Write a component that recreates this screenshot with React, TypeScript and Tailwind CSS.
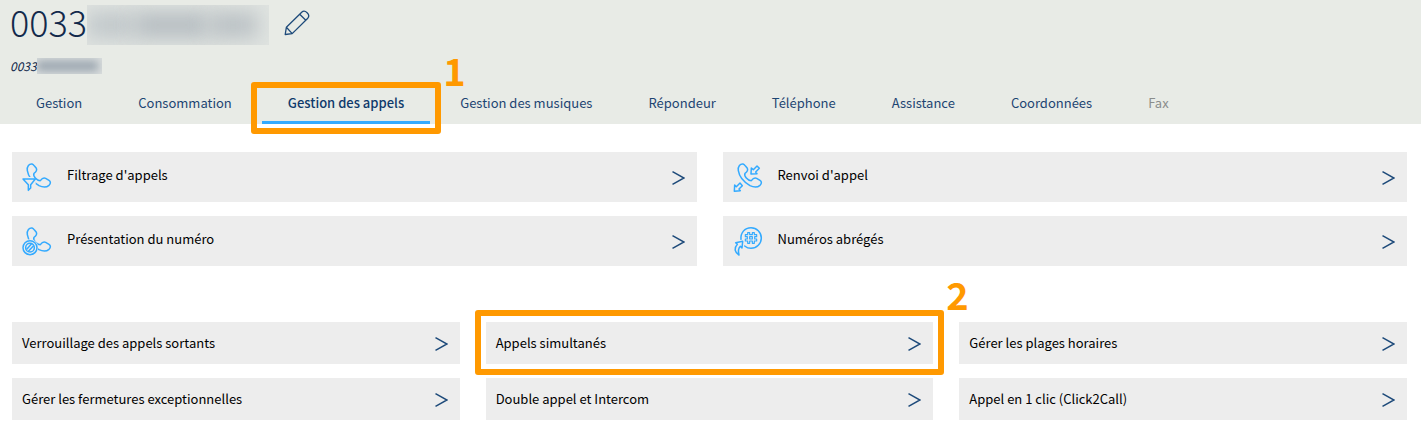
import type { ReactNode } from "react";

const HANDSET =
  "M52 74 C50 61 58 53 66 54 C70 55 71 57 74 61 L79 67 C82 74 78 78 72 82 C68 90 80 104 91 104 C96 97 100 93 107 97 L117 103 C123 107 122 113 117 118 C110 124 100 125 87 119 C70 109 55 93 52 74 Z";

function ServiceIcon({ children }: { children: ReactNode }) {
  return (
    <svg
      viewBox="36 51 87 87"
      className="size-[29px] shrink-0 overflow-visible"
      fill="none"
      stroke="#33aaff"
      strokeWidth="4.5"
      strokeLinejoin="round"
      strokeLinecap="round"
      aria-hidden="true"
    >
      {children}
    </svg>
  );
}

const FilterIcon = () => (
  <ServiceIcon>
    <path d={HANDSET} />
    <path d="M36 93 H69 L73 100 L78 112 L70 120 L60 136 H36 Z" fill="#ededed" stroke="none" />
    <path d="M39 99 H76 L62 116 V126 L55 133 V116 Z" />
  </ServiceIcon>
);

const ForwardIcon = () => (
  <ServiceIcon>
    <path d={HANDSET} />
    <path d="M91 66 L90 84 L108 83 L104 78 L115 67 L108 60 L97 71 Z" />
    <path d="M41 117 L40 136 L58 134 L54 129 L64 119 L57 111 L46 122 Z" />
  </ServiceIcon>
);

const PresentationIcon = () => (
  <ServiceIcon>
    <path d={HANDSET} />
    <circle cx="60" cy="113" r="25" fill="#ededed" stroke="none" />
    <circle cx="60" cy="113" r="21" />
    <circle cx="60" cy="113" r="13" />
    <path d="M51 117 L64 102 M56 123 L70 108" />
  </ServiceIcon>
);

const ShortNumberIcon = () => (
  <ServiceIcon>
    <path d="M60 88 C58 69 71 53 90 53 C107 53 121 67 121 84 C121 101 107 115 90 115 C83 115 76 112 71 108" />
    <path d="M80 68 H86 V74 H94 V68 H100 V74 H107 V80 H101 V87 H107 V93 H100 V100 H94 V93 H86 V100 H80 V93 H73 V87 H79 V80 H73 V74 H80 Z M86 80 H94 V87 H86 Z" strokeWidth="3.5" />
    <path d="M44 98 L65 94 L63 114 L58 109 C51 116 51 124 54 135 C41 127 38 115 49 103 Z" />
  </ServiceIcon>
);

function Chevron() {
  return (
    <svg viewBox="0 0 13 14" className="mt-0.5 h-3.5 w-[13px] shrink-0" fill="none" stroke="#1d4a7a" strokeWidth="1.5" aria-hidden="true">
      <path d="M0.5 0.7 L12 7 L0.5 13.3" />
    </svg>
  );
}

function Callout({ label, className, labelClassName }: { label: string; className: string; labelClassName: string }) {
  return (
    <span className={`pointer-events-none absolute z-10 rounded-[3px] border-6 border-[#ff9900] ${className}`}>
      <span className={`absolute left-full ml-2 text-[38px] leading-[38px] font-bold text-[#ff9900] ${labelClassName}`}>{label}</span>
    </span>
  );
}

const tabs = [
  "Gestion",
  "Consommation",
  "Gestion des appels",
  "Gestion des musiques",
  "Répondeur",
  "Téléphone",
  "Assistance",
  "Coordonnées",
  "Fax",
];

const services = [
  { label: "Filtrage d'appels", Icon: FilterIcon },
  { label: "Renvoi d'appel", Icon: ForwardIcon },
  { label: "Présentation du numéro", Icon: PresentationIcon },
  { label: "Numéros abrégés", Icon: ShortNumberIcon },
];

const options = [
  "Verrouillage des appels sortants",
  "Appels simultanés",
  "Gérer les plages horaires",
  "Gérer les fermetures exceptionnelles",
  "Double appel et Intercom",
  "Appel en 1 clic (Click2Call)",
];

export default function App() {
  return (
    <div className="bg-white font-['Noto_Sans_CJK_SC','Noto_Sans',sans-serif] text-[13px] text-black">
      <header className="bg-[#e8ebe6]">
        <div className="flex h-[50px] items-start pl-2.5">
          <h1 className="text-[36px] leading-[42px] font-light text-[#12294b]">0033</h1>
          <span className="mt-[5px] flex h-10 w-[182px] items-center overflow-hidden bg-[#dfe3e0] pr-3" aria-hidden="true">
            <span className="h-6 w-12 bg-[#bfc6c9] blur-[10px]" />
            <span className="h-6 grow bg-[#b4bbc0] blur-[10px]" />
            <span className="h-6 w-12 bg-[#b8bfc3] blur-[10px]" />
          </span>
          <button type="button" aria-label="Modifier" className="mt-2.5 ml-[15px]">
            <svg viewBox="0 0 26 26" className="size-[26px]" fill="none" stroke="#1d4a7a" strokeWidth="1.3" strokeLinejoin="round" aria-hidden="true">
              <path d="M1.2 24.5 L2.4 17.2 L17.7 2.2 C21 -0.8 26.8 4.6 23.8 8.2 L8.2 23.6 Z M2.4 17.2 L8.2 23.6 M15.7 4.2 L21.8 10.2" />
            </svg>
          </button>
        </div>
        <div className="flex h-[42px] items-center pb-2.5 pl-2.5">
          <em className="text-xs leading-5 text-[#12294b]">0033</em>
          <span className="flex h-4 w-[65px] items-center overflow-hidden bg-[#d9dddd] pr-1" aria-hidden="true">
            <span className="h-2.5 grow bg-[#99a4ae] blur-[4px]" />
          </span>
        </div>
        <nav className="flex gap-1 pl-2.5 text-[#1d4572]" aria-label="Sections">
          {tabs.map((tab) => {
            const active = tab === "Gestion des appels";
            return (
              <a
                key={tab}
                href="#"
                aria-current={active ? "page" : undefined}
                className={`relative flex h-8 items-center border-b-3 px-[26px] pb-2 whitespace-nowrap ${
                  active ? "border-[#33aaff] font-medium text-[#0f3a6b]" : "border-transparent"
                } ${tab === "Fax" ? "text-[#8a8d8c]" : ""}`}
              >
                {tab}
                {active && <Callout label="1" className="-inset-x-[11px] -top-2.5 -bottom-[13px]" labelClassName="-top-[37px]" />}
              </a>
            );
          })}
        </nav>
      </header>

      <main className="pt-7 pr-3.5 pb-6 pl-3">
        <div className="grid grid-cols-2 gap-x-[26px] gap-y-3.5">
          {services.map(({ label, Icon }) => (
            <a key={label} href="#" className="flex h-[50px] items-center bg-[#ededed] pr-3 pl-2.5">
              <Icon />
              <span className="ml-4 grow pb-1">{label}</span>
              <Chevron />
            </a>
          ))}
        </div>
        <div className="mt-14 grid grid-cols-3 gap-x-[26px] gap-y-3.5">
          {options.map((label) => (
            <a key={label} href="#" className="relative flex h-[42px] items-center justify-between bg-[#ededed] pr-3 pl-2.5">
              <span>{label}</span>
              <Chevron />
              {label === "Appels simultanés" && (
                <Callout label="2" className="-inset-x-[11px] -top-3 -bottom-[11px]" labelClassName="-top-[41px]" />
              )}
            </a>
          ))}
        </div>
      </main>
    </div>
  );
}
